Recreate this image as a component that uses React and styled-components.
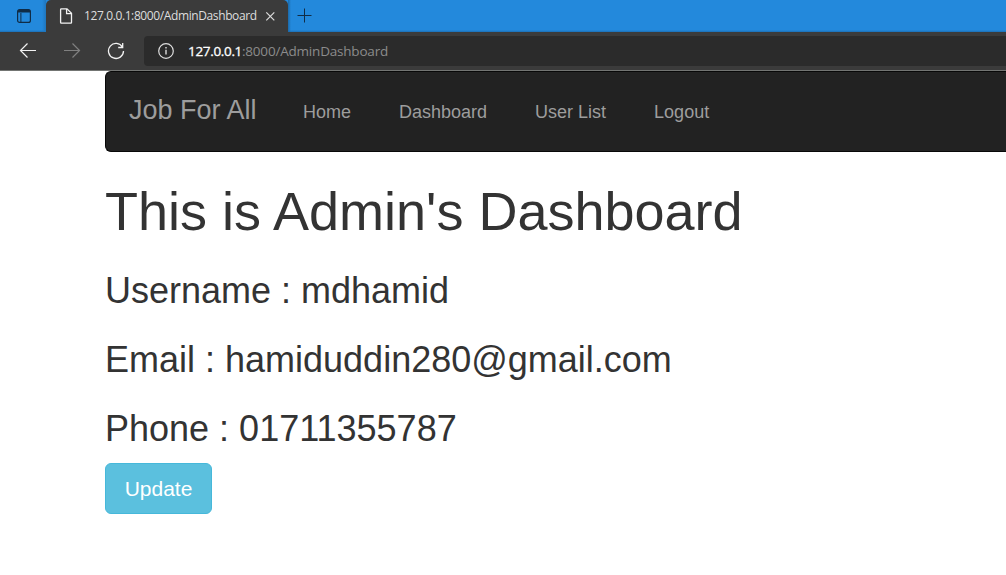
import React from 'react';
import styled, { createGlobalStyle } from 'styled-components';

const GlobalStyle = createGlobalStyle`
  * { box-sizing: border-box; }
  html, body { margin: 0; background: #fff; overflow: hidden; }
  body { font-family: "Liberation Sans", Arial, sans-serif; color: #333; }
`;

const Window = styled.div`
  width: 100%;
  height: 100vh;
  overflow: hidden;
`;

const TabStrip = styled.div`
  display: flex;
  height: 32px;
  background: linear-gradient(#2389dc 0, #2389dc 30px, #1c6fb4 32px);
`;

const TabActions = styled.div`
  width: 46px;
  height: 32px;
  padding: 8px 0 0 16px;
  background: linear-gradient(90deg, transparent 42px, #1f76bd 46px);
`;

const Tab = styled.div`
  display: flex;
  align-items: center;
  width: 242px;
  height: 32px;
  padding-left: 13px;
  background: #3b3b3b;
  border-radius: 5px 5px 0 0;
`;

const TabTitle = styled.span`
  width: 172px;
  margin: 0 8px 0 11px;
  font: 12px/16px "Open Sans", "Noto Sans", sans-serif;
  letter-spacing: ${(p) => p.$tracking}px;
  color: #dedede;
  white-space: nowrap;
`;

const NewTab = styled.div`
  flex: 1;
  padding: 8px 0 0 9px;
  background: linear-gradient(90deg, #1b69a8 0, transparent 3px);
`;

const Toolbar = styled.div`
  display: flex;
  align-items: center;
  height: 39px;
  padding-left: 19px;
  background: #3b3b3b;
  border-bottom: 1px solid #737573;
`;

const Nav = styled.div`
  display: flex;
  gap: 26px;
  width: 125px;
`;

const AddressBar = styled.div`
  display: flex;
  align-items: center;
  flex: 1;
  height: 30px;
  padding-left: 14px;
  background: #2b2b2b;
  border-radius: 4px 0 0 4px;
`;

const Url = styled.span`
  margin-left: 14px;
  font: 13.5px/18px "Open Sans", "Noto Sans", sans-serif;
  letter-spacing: ${(p) => p.$tracking}px;
  color: #8c8c8c;
  white-space: nowrap;
`;

const Host = styled.span`
  color: #fff;
  letter-spacing: -0.33px;
  -webkit-text-stroke: 0.3px #fff;
`;

const Icon = styled.svg`
  display: block;
  flex: none;
  fill: none;
  stroke: ${(p) => p.$color || '#f2f2f2'};
  stroke-width: ${(p) => p.$weight || 1.2};
`;

const Page = styled.main`
  margin-left: 105px;
`;

const Navbar = styled.nav`
  display: flex;
  align-items: baseline;
  height: 81px;
  padding: 21px 0 0 23px;
  background: #222;
  border: 1px solid #080808;
  border-right: 0;
  border-radius: 6px 0 0 6px;
  color: #9d9d9d;
`;

const Brand = styled.a`
  width: 174px;
  font-size: 27px;
  line-height: 34px;
`;

const Links = styled.div`
  display: flex;
  gap: 48px;
  font-size: 18px;
  position: relative;
  top: -1px;
`;

const Title = styled.h1`
  margin: 30px 0;
  font-size: 54px;
  font-weight: 400;
  line-height: 59px;
`;

const Detail = styled.h3`
  margin: 30px 0 15px;
  font-size: 36px;
  font-weight: 400;
  line-height: 39px;
`;

const Button = styled.button`
  display: block;
  width: 107px;
  height: 51px;
  padding: 0;
  color: #fff;
  background: #5bc0de;
  border: 1px solid #46b8da;
  border-radius: 6px;
  font: 21px/30px "Liberation Sans", Arial, sans-serif;
`;

const links = ['Home', 'Dashboard', 'User List', 'Logout'];
const details = [
  ['Username', 'mdhamid'],
  ['Email', 'hamiduddin280@gmail.com'],
  ['Phone', '01711355787'],
];

export default function App() {
  return (
    <Window>
      <GlobalStyle />
      <TabStrip>
        <TabActions>
          <Icon width="16" height="16" $color="#102c46">
            <rect x="1.6" y="1.6" width="12.8" height="12.8" rx="2" />
            <path d="M2 3.2h12" strokeWidth="2.6" />
            <path d="M4.9 5v9.5" strokeWidth="1" />
          </Icon>
        </TabActions>
        <Tab>
          <Icon width="14" height="16" $weight="1.3">
            <path d="M2.2.8H8l4.5 4.5v9.2a.6.6 0 0 1-.6.6H2.2a.6.6 0 0 1-.6-.6V1.4A.6.6 0 0 1 2.2.8Z" />
            <path d="M7.6 1v4.6h4.7" />
          </Icon>
          <TabTitle $tracking={-0.39}>127.0.0.1:8000/AdminDashboard</TabTitle>
          <Icon width="12" height="12" $color="#dcdcdc">
            <path d="M2.3 2.3l8 8M10.3 2.3l-8 8" />
          </Icon>
        </Tab>
        <NewTab>
          <Icon width="16" height="16" $color="#102c46" $weight="1">
            <path d="M7.5 .5v14M.5 7.5h14" />
          </Icon>
        </NewTab>
      </TabStrip>
      <Toolbar>
        <Nav>
          <Icon width="18" height="18">
            <path d="M17 8.5H1.5M8.5 1.5l-7 7 7 7" />
          </Icon>
          <Icon width="18" height="18" $color="#808080">
            <path d="M1 8.5h15.5M9.5 1.5l7 7-7 7" />
          </Icon>
          <Icon width="18" height="18" $weight="1.3">
            <path d="M15.5 5.2A7.5 7.5 0 1 0 16.5 9M15.7 1v4.5h-4.5" />
          </Icon>
        </Nav>
        <AddressBar>
          <Icon width="16" height="16" $color="#dedede">
            <circle cx="8" cy="8" r="7.3" />
            <path d="M8 6.8v4.7M8 4v1.5" strokeWidth="1.4" />
          </Icon>
          <Url $tracking={-0.2}><Host>127.0.0.1</Host>:8000/AdminDashboard</Url>
        </AddressBar>
      </Toolbar>
      <Page>
        <Navbar>
          <Brand>Job For All</Brand>
          <Links>
            {links.map((label) => <a key={label}>{label}</a>)}
          </Links>
        </Navbar>
        <Title>This is Admin's Dashboard</Title>
        {details.map(([name, value]) => (
          <Detail key={name}>{`${name} : ${value}`}</Detail>
        ))}
        <Button>Update</Button>
      </Page>
    </Window>
  );
}
